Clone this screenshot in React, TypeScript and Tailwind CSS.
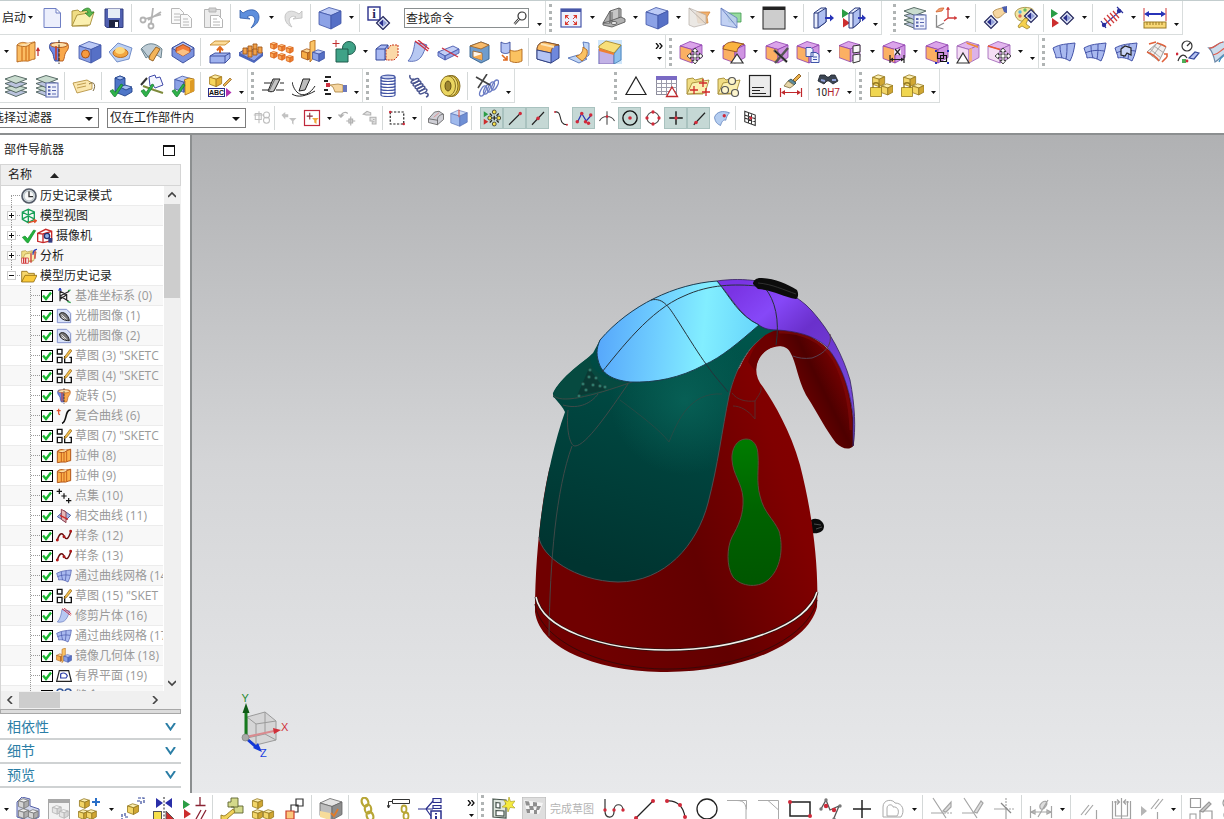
import { useState } from 'react'
import type { ReactNode } from 'react'

type Faces = [string, string, string, string]

// top, left, right, outline
const BLUE: Faces = ['#bccaf6', '#8ca2e6', '#5670c6', '#3f54a6']
const ORANGE: Faces = ['#fcd592', '#f7ae48', '#d9822a', '#a3561a']
const YELLOW: Faces = ['#fbeeb0', '#f2d568', '#d0a632', '#94781f']
const GRAY: Faces = ['#e4e4e4', '#bdbdbd', '#8d8d8d', '#666666']
const PALE: Faces = ['#f1f1f1', '#e6e6e6', '#d6d6d6', '#b5b5b5']
const SYNC: Faces = ['#dba4ea', '#fbb063', '#cf94e2', '#8e3fae']
const LILAC: Faces = ['#e2b6ee', '#f4ddf4', '#dcb2e8', '#9a5cb4']

const Cube = ({ c, x = 0, y = 0, s = 1 }: { c: Faces; x?: number; y?: number; s?: number }) => (
  <g transform={`translate(${x} ${y}) scale(${s})`} stroke={c[3]} strokeWidth={0.8 / s} strokeLinejoin="round">
    <path d="M1 6 11 1.500 23 5 13 9.500Z" fill={c[0]} />
    <path d="M1 6 13 9.500V23L1 18.500Z" fill={c[1]} />
    <path d="M13 9.500 23 5V17.500L13 23Z" fill={c[2]} />
  </g>
)

const Dots = ({ p, fill = '#d02a3a', r = 1.7 }: { p: number[][]; fill?: string; r?: number }) => (
  <>
    {p.map(([x, y], i) => (
      <circle key={i} cx={x} cy={y} r={r} fill={fill} />
    ))}
  </>
)

const Tick = () => <path d="M1 17l3-1.500 2 3 6-8.500 2 1L6.500 22.500H5Z" fill="#2fb34a" stroke="#137a2c" strokeWidth=".7" />

const Diamond = ({ x = 0, y = 0 }) => (
  <g transform={`translate(${x} ${y})`}>
    <path d="M7 .5 13.500 7 7 13.500.5 7Z" fill="#dfe4f6" stroke="#23265c" strokeWidth="1.200" />
    <path d="M7 3.500V10.500L3 7Z" fill="#2a2f8c" />
    <path d="M7 3.500V10.500L11 7Z" fill="#93a0d8" />
  </g>
)

const Stack = () => (
  <g fill="#c9dccf" stroke="#4b5f5a" strokeWidth=".9" strokeLinejoin="round">
    <path d="M1 18l10-3 12 3-11 4.500Z" fill="#bac3dd" />
    <path d="M1 14l10-3 12 3-11 4.500Z" />
    <path d="M1 9.500l10-3 12 3L12 14Z" fill="#bac3dd" />
    <path d="M1 5l10-3.500L23 5 12 9.500Z" />
  </g>
)

const List = () => (
  <g>
    <rect x="11" y="9" width="12" height="14" fill="#eef1fc" stroke="#5a68b0" />
    <path d="M13 12h2.500v2H13ZM13 15.500h2.500v2H13ZM13 19h2.500v2H13Z" fill="#5a68b0" />
    <path d="M17 13h4M17 16.500h4M17 20h4" stroke="#5a68b0" />
  </g>
)

const Move = ({ x = 8, y = 8 }) => (
  <path
    transform={`translate(${x} ${y})`}
    d="M8 0l3 3.500H9V7h3.500V5L16 8l-3.500 3V9H9v3.500h2L8 16l-3-3.500h2V9H3.500v2L0 8l3.500-3v2H7V3.500H5Z"
    fill="#fff"
    stroke="#333"
    strokeWidth=".9"
  />
)

const Sheet = ({ grid = 1 }) => (
  <g stroke="#4453a8" strokeWidth="1" fill="none">
    <path d="M1 8C8 4 15 4 23 3c-1 7-2 12-5 18-5-3-10-4-14-3C4 15 2 12 1 8Z" fill="#a9b9ef" />
    <path d="M8 6c0 5 1 8 2 12M15 4c0 5 0 10-1 15" />
    {grid > 1 && <path d="M2 13c7-3 13-3 19-2" />}
  </g>
)

const Folder = () => (
  <g stroke="#a58c35" strokeWidth=".9" strokeLinejoin="round">
    <path d="M1 20V5l6-1 2 2 8-2v16Z" fill="#f0dd84" />
    <path d="M1 20 6 9l17-3-4 13Z" fill="#fbf0b0" />
  </g>
)

const PlayRed = () => (
  <g>
    <path d="M0 3l7 4.500L0 12Z" fill="#2a9d45" />
    <path d="M1 21.500V12l7 5Z" fill="#cc2e2e" />
  </g>
)

const icons: Record<string, ReactNode> = {
  new: <path d="M4 2.500h12l4.500 4.500v14.500H4ZM16 2.500V7h4.500" fill="#eceffc" stroke="#6f7fc4" />,
  open: (
    <g>
      <Folder />
      <path d="M11 5c5-5 9-3 9 1h3l-4.500 5L14 7h3c0-3-3-3-6-2Z" fill="#58b84e" stroke="#2c7a2c" strokeWidth=".7" />
    </g>
  ),
  save: (
    <g>
      <path d="M3 3h18v18.500H5L3 20Z" fill="#5060b0" stroke="#333f80" />
      <rect x="6" y="3" width="12" height="9" fill="#e6ecf6" />
      <rect x="7" y="14" width="10" height="7.500" fill="#1d2440" />
      <rect x="13" y="16" width="3" height="5" fill="#fff" />
    </g>
  ),
  cut: (
    <g fill="none" stroke="#b3b3b3" strokeWidth="1.800">
      <circle cx="4" cy="14" r="2.500" />
      <circle cx="12" cy="20" r="2.500" />
      <path d="M6 13 22 8.500M12 17.500 14 2M22 6 9 14" />
    </g>
  ),
  copy: (
    <g fill="#fafafa" stroke="#b8b8b8">
      <path d="M1.500 2.500h8l4 4v11h-12Z" />
      <path d="M4 8h6M4 11h6M4 14h6" />
      <path d="M10.500 8.500h7l4 4v9h-11Z" />
      <path d="M13 13h5M13 16h6M13 19h6" />
    </g>
  ),
  paste: (
    <g fill="#ececec" stroke="#b5b5b5">
      <path d="M3.500 3.500h16v18h-16Z" />
      <path d="M8 2h7v4H8Z" fill="#d2d2d2" />
      <path d="M9.500 9.500h8l4 4v8h-12Z" fill="#fff" />
      <path d="M12 13h4M12 16h7M12 19h7" />
    </g>
  ),
  undo: <path d="M2 12V4l3 3c8-6 16-3 16 4 0 5-3 8-8 11 3-4 5-8 3-11-2-2-4-2-7 0l3 2Z" fill="#5e8fdd" stroke="#2e5aa8" strokeWidth=".8" />,
  redo: <path d="M21 12V5l-3 3C11 3 4 5 4 11c0 4 2 8 7 10-3-4-4-8-1-10 2-1 3-1 5 0l-3 2Z" fill="#e0e0e0" stroke="#bdbdbd" strokeWidth=".8" />,
  cube: <Cube c={BLUE} />,
  info: (
    <g>
      <rect x="1" y="1" width="12" height="13" fill="#fff" stroke="#2a2f8c" strokeWidth="1.400" />
      <text x="7" y="12" textAnchor="middle" fontSize="13" fontWeight="700" fontFamily="Liberation Serif" fill="#23265c">i</text>
      <Diamond x={9} y={10} />
    </g>
  ),
  fit: (
    <g>
      <rect x="2" y="3" width="20" height="18" fill="#eef1fc" stroke="#4656a8" strokeWidth="1.200" />
      <path d="M2 3h20v3H2Z" fill="#4656a8" />
      <path d="M6 9h4L6 13ZM18 9v4l-4-4ZM6 19v-4l4 4ZM18 19h-4l4-4Z" fill="#d93a2e" />
      <path d="M7 10l3 3M17 10l-3 3M7 18l3-3M17 18l-3-3" stroke="#d93a2e" />
    </g>
  ),
  bracket: (
    <g stroke="#5a5a5a" strokeWidth=".9" strokeLinejoin="round">
      <path d="M8 5 17 2l2 1v10l-9 3-2 1Z" fill="#c6c6c6" />
      <path d="M8 5 1 17l7 0ZM1 17l7-2 11-4 4 2v3l-13 5-9-2Z" fill="#b0b0b0" />
      <path d="M17 2v10M10 6v10" fill="none" />
      <ellipse cx="12" cy="17" rx="3" ry="1.500" fill="#eee" />
    </g>
  ),
  clipOff: (
    <g strokeWidth=".8">
      <path d="M8 6h14l-3 5 1 6H10Z" fill="#f4b06a" stroke="#d08b48" />
      <path d="M1 2v17l5 2 12-3V9Z" fill="#e8e4e0" opacity=".85" stroke="#b3aaa2" />
      <path d="M1 2 18 18" stroke="#b3aaa2" />
    </g>
  ),
  clip: (
    <g strokeWidth=".8">
      <path d="M8 7h14v9H10Z" fill="#97dba0" stroke="#3f9a4c" />
      <path d="M2 2v17l16 3V12Z" fill="#bccdf2" opacity=".9" stroke="#5a73bb" />
      <path d="M2 2 18 21" stroke="#5a73bb" />
    </g>
  ),
  background: (
    <g>
      <rect x="1" y="1" width="22" height="22" fill="#cdcdcd" stroke="#222" />
      <path d="M1 1h22v3H1Z" fill="#222" />
    </g>
  ),
  viewOut: (
    <g strokeLinejoin="round">
      <path d="M3 7 10 2h5v14l-8 6H3Z" fill="#e9eefc" stroke="#28397c" />
      <path d="M7 7 15 2v14l-8 6Z" fill="#aebff0" stroke="#28397c" />
      <path d="M3 7h4" stroke="#28397c" />
      <path d="M14 11h5V8.500l4 3.500-4 3.500V13h-5Z" fill="#2733b8" />
    </g>
  ),
  viewReplace: (
    <g strokeLinejoin="round">
      <PlayRed />
      <path d="M7 7 13 2h5v14l-7 6H7Z" fill="#e9eefc" stroke="#28397c" />
      <path d="M11 7 18 2v14l-7 6ZM7 7h4" fill="#aebff0" stroke="#28397c" />
      <path d="M16 11h4V8.500l4 3.500-4 3.500V13h-4Z" fill="#2733b8" />
    </g>
  ),
  layerList: (
    <g>
      <Stack />
      <List />
    </g>
  ),
  layers: <Stack />,
  wcs: (
    <g fill="none" strokeWidth="1.300">
      <path d="M14 2v10h8M14 12l-4 3" stroke="#d03a3a" />
      <path d="M12.500 3.500 14 1l1.500 2.500ZM20.500 10.500 23 12l-2.500 1.500Z" fill="#d03a3a" stroke="#d03a3a" strokeWidth=".6" />
      <path d="M2.500 9v12L10 17M2.500 21l7 2" stroke="#8a8a8a" />
      <path d="M2 6c2-4 5-4 8-4l-2 3Z" fill="#f0a070" stroke="#d0602a" strokeWidth=".8" />
    </g>
  ),
  handDiamond: (
    <g>
      <path d="M10 6c2-3 6-3 12-5l2 5c-4 1-5 5-9 6-2 0-4-1-5-6Z" fill="#f6d6a0" stroke="#a9803c" strokeWidth=".8" />
      <path d="M19 1l5-1v7l-3-1Z" fill="#4c5fb0" />
      <Diamond x={1} y={9} />
    </g>
  ),
  palette: (
    <g>
      <path d="M1 8c0-5 8-8 15-6 5 1 5 6 2 8-3 1-5 0-6 3 0 4-10 3-11-5Z" fill="#f3e6a4" stroke="#9b8532" strokeWidth=".8" />
      <Dots p={[[6, 6]]} fill="#59b6e0" />
      <Dots p={[[11, 4]]} fill="#6ac060" />
      <Dots p={[[6, 10]]} fill="#e06a50" />
      <Diamond x={10} y={3} />
      <path d="M4 20l7-8 3 1-2 5 4 3-3 2-5-3-3 2Z" fill="#f5d04e" stroke="#9b8532" strokeWidth=".8" />
    </g>
  ),
  playDiamond: (
    <g>
      <PlayRed />
      <Diamond x={9} y={5} />
    </g>
  ),
  measurePath: (
    <g strokeWidth="1.200">
      <path d="M3 20 21 4" stroke="#3440b8" />
      <path d="M4 12l7 8M7 9l7 8M10 7l7 8M13 5l6 7" stroke="#d03a3a" />
      <Dots p={[[4, 19], [19, 5]]} fill="#2a2f9c" r={2.2} />
      <path d="M1 15l5 7M17 1l6 6" stroke="#2a2f9c" />
    </g>
  ),
  measure: (
    <g>
      <path d="M1 2v13M23 2v13" stroke="#d03a3a" />
      <path d="M1 8l5-3v2h12V5l5 3-5 3V9H6v2Z" fill="#2733b8" />
      <rect x="1" y="16" width="22" height="6" fill="#f8d877" stroke="#9b7a22" />
      <path d="M4 16v3M7 16v3M10 16v3M13 16v3M16 16v3M19 16v3" stroke="#9b7a22" />
    </g>
  ),
  extrude: (
    <g stroke="#b2631a" strokeWidth=".9" strokeLinejoin="round">
      <path d="M1 5c3-3 6-3 9-2 3 1 5-1 9-1v17c-4 0-6 3-9 2-3 0-6 0-9 1Z" fill="#fbbd63" />
      <path d="M6 6v15M10 3v18M13 5v16" fill="none" stroke="#d97e28" strokeWidth="1.400" />
      <path d="M1 5c5 2 10 2 12 0s4-2 6-3" fill="#fde0ab" />
      <path d="M22 16V9M20.500 11 22 8l1.500 3" fill="none" stroke="#c02d2d" strokeWidth="1.200" />
    </g>
  ),
  revolve: (
    <g strokeWidth=".9">
      <path d="M12 3H4C1 6 3 10 5 12c2 3 1 6 3 9h4Z" fill="#6f88e8" stroke="#2d3f90" />
      <path d="M12 3h8c3 3 1 7-1 9-2 3-1 6-3 9h-4Z" fill="#f9a84a" stroke="#b0561a" />
      <ellipse cx="12" cy="5" rx="8.500" ry="2.500" fill="#fde0ab" stroke="#b0561a" />
      <path d="M12 0v24" stroke="#222" strokeDasharray="3 1.500" />
      <path d="M9 6v14" stroke="#c8361f" strokeWidth="1.500" />
    </g>
  ),
  hole: (
    <g>
      <Cube c={BLUE} />
      <circle cx="7.500" cy="14" r="4" fill="#f79a3e" stroke="#a04812" strokeWidth=".9" />
    </g>
  ),
  boss: (
    <g strokeWidth=".9">
      <path d="M0 12 9 3l14 5-3 11-12 3Z" fill="#bcd0f2" stroke="#6a86c4" />
      <ellipse cx="11.500" cy="13" rx="7.500" ry="4.500" fill="#f3a63f" stroke="#b0621c" />
      <ellipse cx="11" cy="10.500" rx="5" ry="3.500" fill="#fdd87e" />
    </g>
  ),
  rib: (
    <g strokeWidth=".9" strokeLinejoin="round">
      <path d="M1 9C7 2 15 2 22 9l-1 9C16 13 11 14 6 18Z" fill="#bfcdd6" stroke="#5f7884" />
      <path d="M10 15 16 7l4 2-7 12-4-2Z" fill="#f4b459" stroke="#8e5a1c" />
      <path d="M2 9l7 9" stroke="#5f7884" />
    </g>
  ),
  pocket: (
    <g strokeWidth=".9" strokeLinejoin="round">
      <path d="M1 8 12 2l11 6v8l-11 7-11-7Z" fill="#7b92de" stroke="#35489a" />
      <path d="M1 8 12 2l11 6-11 7Z" fill="#b4c4f4" stroke="#35489a" />
      <path d="M5 8l7-3.500L19 8v4l-7 4-7-4Z" fill="#f47c3a" stroke="#a0431a" />
      <path d="M5 12l7-3 7 3-7 4Z" fill="#fbc182" />
    </g>
  ),
  offsetRegion: (
    <g strokeWidth=".9" strokeLinejoin="round">
      <path d="M2 5l5-4h15l-5 4Z" fill="#fcdc9a" stroke="#c68a2e" />
      <path d="M12 15V8M9 10.500 12 7l3 3.500" fill="none" stroke="#e06a20" strokeWidth="2" />
      <path d="M2 16l5-3h15v5l-5 5H2Z" fill="#9fb2ee" stroke="#35489a" />
      <path d="M2 16h15l5-3M17 16v7" fill="none" stroke="#35489a" />
    </g>
  ),
  pattern: (
    <g strokeWidth=".9">
      <path d="M0 13 8 8l16 5-9 8Z" fill="#8da3ea" stroke="#35489a" />
      <path d="M0 13v3l15 7 9-7v-3l-9 8Z" fill="#4b66bd" />
      {[[4, 8], [9, 6], [14, 4], [9, 11], [14, 9], [19, 7]].map(([x, y]) => (
        <path key={`${x}-${y}`} d={`M${x} ${y}h4v6h-4Z`} fill="#f0a14a" stroke="#a35a1a" />
      ))}
    </g>
  ),
  patternBoxes: (
    <g>
      {[[0, 2], [8, 4], [16, 6], [0, 11], [8, 13], [16, 15]].map(([x, y]) => (
        <Cube key={`${x}-${y}`} c={['#fdc987', '#fba858', '#ef7f31', '#d9641c']} x={x} y={y} s={0.31} />
      ))}
    </g>
  ),
  mirror: (
    <g>
      <Cube c={ORANGE} x={0} y={8} s={0.52} />
      <path d="M9 2 14 0v16l-5 6Z" fill="#fbc466" stroke="#b76d1c" strokeWidth=".9" />
      <Cube c={BLUE} x={11} y={9} s={0.54} />
    </g>
  ),
  unite: (
    <g>
      <circle cx="17" cy="8" r="6.500" fill="#3fa287" stroke="#1e5c4c" />
      <path d="M4 9h12v13H4Z" fill="#3fa287" stroke="#1e5c4c" />
      <path d="M4 0v7M.5 3.500h7" stroke="#c02d2d" />
    </g>
  ),
  trimBody: (
    <g strokeWidth="1" strokeLinejoin="round">
      <path d="M1 9l5-4h7v10l-3 5H1Z" fill="#a9b9f2" stroke="#35489a" />
      <path d="M13 9l3-4h7v11l-4 4h-8V9" fill="#fbd9a8" stroke="#c8361f" strokeDasharray="2 1" />
      <path d="M1 9h9l3-4M10 9v11" fill="none" stroke="#35489a" />
    </g>
  ),
  trimSheet: (
    <g strokeWidth=".9">
      <path d="M9 2c4 2 8 1 12 3-3 5-3 8-6 12-3 4-8 5-13 4 5-5 6-13 7-19Z" fill="#b7c8f2" stroke="#5468b4" />
      <path d="M9 1l13 10M12 0l11 9" stroke="#cf3140" strokeWidth="1.400" />
    </g>
  ),
  blade: (
    <g strokeWidth=".9" strokeLinejoin="round">
      <path d="M1 12 16 6l6 3-14 7Z" fill="#c2cef5" stroke="#4a5bb0" />
      <path d="M1 12v4l7 4v-4ZM8 16v4l14-7V9Z" fill="#9aace8" stroke="#4a5bb0" />
      <path d="M5 8l16 9" stroke="#cf3140" strokeWidth="1.200" />
    </g>
  ),
  shell: (
    <g strokeWidth=".9" strokeLinejoin="round">
      <path d="M2 6 13 2l8 3v14l-8 4-11-6Z" fill="#6f9ccc" stroke="#33608c" />
      <path d="M2 6 13 2l8 3-8 4Z" fill="#f8bc6c" stroke="#a0662a" />
      <path d="M5 11l9 2v7l-9-3Z" fill="#fff6e8" stroke="#a0662a" />
      <path d="M5 17l9-3v6Z" fill="#f6ad52" />
    </g>
  ),
  thicken: (
    <g strokeWidth=".9">
      <path d="M2 2c3 2 6 2 9 0v10c-3 2-6 2-9 0Z" fill="#b4c4f4" stroke="#35489a" />
      <path d="M11 10c4 2 8 1 12-1v12c-4 2-8 2-12 0Z" fill="#fbc261" stroke="#b0661c" />
      <path d="M3 15l5 5M8 16v4H4" fill="none" stroke="#e06a20" strokeWidth="1.600" />
    </g>
  ),
  edgeBlend: (
    <g strokeWidth=".9" strokeLinejoin="round">
      <path d="M1 10c0-5 3-8 8-8l14 3v13l-8 5-14-4Z" fill="#6f88dc" stroke="#28397c" />
      <path d="M1 10c0-5 3-8 8-8l14 3c-5 0-8 3-8 8Z" fill="#fbb95f" stroke="#8e5118" />
      <path d="M5 4l13 3" stroke="#fde5b8" strokeWidth="2" />
      <path d="M1 10l14 3v10l-14-4Z" fill="#b4c4f4" stroke="#28397c" />
    </g>
  ),
  faceBlend: (
    <g strokeWidth=".9">
      <path d="M16 2l6 1v12l-5 4c1-6 0-12-1-17Z" fill="#bfd4f4" stroke="#5273b8" />
      <path d="M1 18l10-3 9 4-8 4Z" fill="#bfd4f4" stroke="#5273b8" />
      <path d="M9 16c5-1 7-4 7-9l4 3c1 5-1 8-5 11Z" fill="#fbc261" stroke="#b0661c" />
    </g>
  ),
  draft: (
    <g strokeWidth=".9" strokeLinejoin="round">
      <path d="M0 0h24v24H0Z" fill="#cfe6fa" />
      <path d="M1 9l15 5v10H1Z" fill="#c2b2e6" stroke="#7c68b0" />
      <path d="M16 14 23 5v15l-7 4Z" fill="#8dc0ee" stroke="#4f85b8" />
      <path d="M1 6 8 1l15 4-7 8-15-5Z" fill="#f7df7a" stroke="#a5872c" />
      <path d="M1 8l15 5v2L1 11Z" fill="#ef7f31" />
    </g>
  ),
  moveFace: (
    <g>
      <Cube c={SYNC} />
      <Move />
    </g>
  ),
  pullFace: (
    <g>
      <Cube c={SYNC} />
      <path d="M1 9c1-5 5-7 10-7l11 2c-4 1-7 4-7 8Z" fill="#fbb33f" stroke="#8e5118" strokeWidth=".9" />
      <path d="M15 14l6 9H9Z" fill="#fff" stroke="#333" strokeWidth="1.200" />
    </g>
  ),
  deleteFace: (
    <g>
      <Cube c={SYNC} />
      <path d="M9 10l13 12M23 8 10 23" stroke="#555" strokeWidth="2.400" />
      <path d="M10 11l12 11" stroke="#111" />
    </g>
  ),
  copyFace: (
    <g>
      <Cube c={SYNC} />
      <path d="M10 7.500h5l2 2v7h-7ZM15 12.500h5l3 2v8h-8Z" fill="#f2f5ff" stroke="#3f55a8" />
      <path d="M17 17h4M17 19.500h4" stroke="#3f55a8" />
    </g>
  ),
  patternFace: (
    <g>
      <Cube c={SYNC} x={-1} s={0.95} />
      <path d="M14 6l7-1v7l-7 1ZM14 15l7-1v7l-7 2Z" fill="#f8f8f8" stroke="#333" />
    </g>
  ),
  dimFace: (
    <g>
      <Cube c={SYNC} />
      <path d="M8 15v8M22 15v8M8 19.500h14" stroke="#222" strokeWidth="1.200" />
      <path d="M8 19.500l3-2v4ZM22 19.500l-3-2v4Z" fill="#222" />
      <path d="M12 9h7v6h-7Z" fill="#fff" opacity=".8" />
      <path d="M13 9l5 6M18 9l-5 6" stroke="#222" strokeWidth="1.200" />
    </g>
  ),
  groupFace: (
    <g>
      <Cube c={SYNC} />
      <path d="M12.500 12.500h6v6h-6ZM15.500 15.500h6v6h-6Z" fill="none" stroke="#111" strokeWidth="1.200" />
      <path d="M10 10h2v2h-2ZM22 10h2v2h-2ZM10 22h2v2h-2ZM22 22h2v2h-2Z" fill="#2733b8" />
    </g>
  ),
  shapeFace: (
    <g>
      <Cube c={LILAC} />
      <path d="M10 2l12 4v2L11 4Z" fill="#f08a3a" />
      <path d="M13 9.500v13l3-1.500V8Z" fill="#f6b27a" />
      <path d="M7 13l6 10H1Z" fill="#fff" stroke="#333" strokeWidth="1.200" />
    </g>
  ),
  moveEdge: (
    <g>
      <Cube c={LILAC} />
      <path d="M1 6l12 3.500" stroke="#ef5a31" strokeWidth="1.800" />
      <Move />
    </g>
  ),
  surfRuled: <Sheet />,
  surfMesh: <Sheet grid={2} />,
  surfFill: (
    <g>
      <Sheet grid={2} />
      <path d="M7 15V9l4-3 6 2v7l-4-2-2 3Z" fill="#c9d4f6" stroke="#222" strokeWidth="1.200" />
    </g>
  ),
  surfSweep: (
    <g fill="none" strokeWidth="1">
      <path d="M2 12 12 3l9 4-7 14Z" fill="#f1efee" stroke="#999" />
      <path d="M5 9l11 9M9 6l10 7M16 5l-9 12M12 3 4 14" stroke="#a8a8a8" />
      <path d="M2 12c5 2 9 4 12 9M12 3c4 1 7 2 9 4" stroke="#e0603a" strokeWidth="1.500" />
      <path d="M4 4l7-2M17 22l5-5M22 17v-3h-3" stroke="#e0603a" strokeWidth="1.600" />
    </g>
  ),
  curveTools: (
    <g fill="none" strokeWidth="1.200">
      <circle cx="11" cy="6" r="5" stroke="#333" />
      <path d="M11 6l3-3" stroke="#333" />
      <path d="M2 21c2-6 6-8 9-3" stroke="#333" />
      <path d="M13 18l6-6 4 1-5 6Z" fill="#b6c3f2" stroke="#35489a" />
      <path d="M6 19h4v4H6Z" fill="#4cae57" stroke="none" />
      <Dots p={[[1, 14], [11, 21]]} r={1.4} />
    </g>
  ),
  surfSwoop: (
    <g fill="none" strokeWidth="1.200">
      <path d="M2 8C8 9 9 3 16 2h8v10c-8 0-9 6-16 10-1-5-2-10-6-14Z" fill="#ccdcec" stroke="#6b88a8" />
      <path d="M2 8C8 9 9 3 16 2M6 15c8-1 8-8 18-9" stroke="#e05a4a" />
      <path d="M12 22c2-6 6-8 12-9" stroke="#3b8fc0" />
    </g>
  ),
  tag: (
    <g strokeWidth=".9">
      <path d="M1 9l14-3 5 3v6L5 19Z" fill="#fbe7ae" stroke="#b89444" />
      <path d="M5 11l9-2M5 14l9-2" stroke="#b89444" />
      <path d="M17 10c6-4 7 3 4 7" fill="none" stroke="#6b5a30" />
    </g>
  ),
  checkBlock: (
    <g strokeWidth=".9" strokeLinejoin="round">
      <path d="M6 4l5-2 5 2v8l7 2v4l-7 4-10-4Z" fill="#4f76c8" stroke="#24448c" />
      <path d="M6 4l5-2 5 2-5 2ZM11 13l5-2 7 2-6 3Z" fill="#a5bdf0" stroke="#24448c" />
      <Tick />
    </g>
  ),
  checkSketch: (
    <g strokeWidth="1">
      <path d="M3 12l11 4 9 3" stroke="#7e8a3c" strokeWidth="2" />
      <path d="M9 3l6-2 1 3 4-1 3 8-8 3-2-3-3 1Z" fill="#f5f6ff" stroke="#3f49a8" />
      <Tick />
      <path d="M1 11 7 4" stroke="#333" strokeWidth="2" />
    </g>
  ),
  checkPart: (
    <g>
      <Cube c={BLUE} x={3} y={1} s={0.75} />
      <path d="M13 6l5-2 5 1v12l-9 4V7Z" fill="#fbca4a" stroke="#a36a14" strokeWidth=".8" />
      <path d="M19 7v12l4-2V5Z" fill="#dd9a24" />
      <Tick />
    </g>
  ),
  abc: (
    <g>
      <Cube c={['#fbe9a0', '#f7d65c', '#e2ae35', '#a3781a']} x={1} y={0} s={0.55} />
      <path d="M15 11 22 4l1.500 1.500-7 7Z" fill="#e9b34e" stroke="#8a5a1c" strokeWidth=".7" />
      <rect x=".5" y="14.500" width="16" height="8" fill="#fff" stroke="#2a2f8c" />
      <text x="8.500" y="21" textAnchor="middle" fontSize="7" fontWeight="700" fontFamily="Liberation Sans" fill="#111">ABC</text>
      <path d="M18 14l5.500 4.500L18 23Z" fill="#b033b0" />
    </g>
  ),
  gearFlat: (
    <g strokeWidth="1">
      <path d="M1 16h6M15 16h8M3 9h8M19 9h4" fill="none" stroke="#222" />
      <path d="M12 5h7l-6 12c-2 1-4 1-6 0Z" fill="#c4c4c4" stroke="#222" />
      <path d="M14 5 8 17" stroke="#666" />
    </g>
  ),
  gearCurve: (
    <g strokeWidth="1">
      <path d="M0 8c3 14 14 18 23 4" fill="none" stroke="#222" />
      <path d="M0 20c6 4 14 2 23-3" fill="none" stroke="#222" />
      <path d="M11 5h7l-5 11-6 1Z" fill="#bdbdbd" stroke="#222" />
    </g>
  ),
  listHand: (
    <g>
      <path d="M2 2h6v2H2ZM1 6h4v2H1ZM1 15h4v2H1ZM2 19h6v2H2Z" fill="#222" />
      <rect x="3" y="9" width="4" height="4" fill="#cf3140" />
      <path d="M7 11l8-1 5 1v7h-8l-2-5Z" fill="#f6d6a0" stroke="#a9803c" strokeWidth=".8" />
      <path d="M20 11h4v7h-4Z" fill="#6a78bc" />
    </g>
  ),
  coil: (
    <g fill="none" stroke="#4355a4" strokeWidth="1.200">
      {[3, 6, 9, 12, 15, 18].map((y) => (
        <path key={y} d={`M5 ${y}c0 2 14 2 14 0M5 ${y}v3c0 2 14 2 14 0v-3`} />
      ))}
      <ellipse cx="12" cy="3" rx="7" ry="1.800" fill="#c8d0ee" />
    </g>
  ),
  spring: (
    <g fill="none" stroke="#4a5590" strokeWidth="1.500">
      <path d="M3 1c-1 3 1 5 4 4" />
      {[0, 1, 2, 3, 4].map((i) => (
        <ellipse key={i} cx={8 + i * 2} cy={7 + i * 2.6} rx="4.200" ry="1.700" transform={`rotate(-25 ${8 + i * 2} ${7 + i * 2.6})`} />
      ))}
      <path d="M18 19c4 0 4 3 1 4" />
    </g>
  ),
  ring: (
    <g strokeWidth=".9">
      <ellipse cx="14" cy="12" rx="8" ry="10.500" fill="#d8b83a" stroke="#7d651a" />
      <ellipse cx="12" cy="12" rx="8" ry="10.500" fill="#efdc70" stroke="#7d651a" />
      <ellipse cx="10" cy="12" rx="7.500" ry="10" fill="#ead560" stroke="#7d651a" />
      <ellipse cx="10" cy="12" rx="3" ry="5" fill="#9c8530" stroke="#5d4a10" />
    </g>
  ),
  springCut: (
    <g fill="none" strokeWidth="1.300">
      {[0, 1, 2, 3].map((i) => (
        <ellipse key={i} cx={8 + i * 4} cy={17 - i * 2} rx="2.400" ry="5.500" transform={`rotate(28 ${8 + i * 4} ${17 - i * 2})`} stroke="#6b7cc4" />
      ))}
      <path d="M1 3l14 8M12 0 3 14" stroke="#444" strokeWidth="1.600" />
    </g>
  ),
  triangle: <path d="M12 3 22 20.500H2Z" fill="#fff" stroke="#222" strokeWidth="1.200" />,
  table: (
    <g>
      <rect x="1.500" y="2.500" width="20" height="18" fill="#fff" stroke="#8d8d9c" />
      <path d="M1 2h21v4H1Z" fill="#7a6ac4" />
      <path d="M1 9.500h21M1 13.500h21M1 17.500h21M6.500 6v14M11.500 6v14M16.500 6v14" stroke="#9c9cab" />
      <path d="M17 13l5.500 9.500h-11Z" fill="#fff" stroke="#c0282c" strokeWidth="1.300" />
    </g>
  ),
  folderPoints: (
    <g>
      <Folder />
      <path d="M17 5v8M13 9h8M8 12v8M4 16h8M20 14v8M16 18h8" stroke="#d02a2a" strokeWidth="1.300" />
    </g>
  ),
  folderCircles: (
    <g>
      <Folder />
      <g fill="#fdf6cf" stroke="#555" strokeWidth="1.200">
        <circle cx="15" cy="7" r="3.500" />
        <circle cx="8" cy="16" r="3.500" />
        <circle cx="18" cy="19" r="3.500" />
      </g>
    </g>
  ),
  note: (
    <g>
      <rect x="1.500" y="1.500" width="21" height="21" fill="#ebebeb" stroke="#222" strokeWidth="1.200" />
      <path d="M4 13.500h12M4 16.500h8M4 19.500h14" stroke="#222" />
    </g>
  ),
  brushDim: (
    <g strokeWidth=".9">
      <path d="M14 6 20 0l2 2-6 6Z" fill="#e8b04c" stroke="#8a5a1c" />
      <path d="M12 5l5 4-2 2-6-4Z" fill="#5c8a9a" stroke="#2e4e5a" />
      <path d="M9 7l6 4-4 3-6-2Z" fill="#e6d6a8" stroke="#8a7a50" />
      <path d="M1.500 14v9M22.500 14v9" stroke="#c0282c" strokeWidth="1.200" />
      <path d="M2 18.500l4-2.500v2h12v-2l4 2.500L18 21v-2H6v2Z" fill="#c0282c" />
    </g>
  ),
  tolerance: (
    <g>
      <path d="M4 1h5l2 2h2l2-2h4l3 6-5 3-4-3h-2l-3 3-6-3Z" fill="#3c4552" stroke="#1c222c" strokeWidth=".8" />
      <path d="M5 6l4 1M16 6l4 0" stroke="#8fa0d8" strokeWidth="2" />
      <text x="12" y="22" textAnchor="middle" fontSize="10" fontFamily="Roboto" fill="#222">10<tspan fill="#b0202c">H7</tspan></text>
    </g>
  ),
  lock: (
    <g>
      <Cube c={YELLOW} x={3} y={0} s={0.55} />
      <Cube c={YELLOW} x={12} y={9} s={0.52} />
      <path d="M1.500 13.500h11v9h-11Z" fill="#f0d650" stroke="#94781f" strokeWidth=".8" />
      <path d="M4 14v-3c0-3 6-3 6 0v3" fill="none" stroke="#94781f" strokeWidth="1.300" />
    </g>
  ),
  // selection bar
  filterAxes: (
    <g fill="none" stroke="#bdbdbd" strokeWidth="1.400">
      <path d="M8 3v16M1 8h14M3 6h8v8H3Z" />
      <circle cx="18" cy="8" r="4" />
      <circle cx="18" cy="15" r="4" />
    </g>
  ),
  filterGray: <path d="M2 8l5-4v3h4v4H7v3ZM12 12h10l-4 4v5l-2-2v-3Z" fill="#c2c2c2" />,
  filterBox: (
    <g>
      <rect x="2" y="2" width="20" height="20" fill="#fff" stroke="#c0283c" strokeWidth="1.600" />
      <path d="M9 5v9M5 9.500h8" stroke="#8a2a34" strokeWidth="1.400" />
      <path d="M12 12h9l-3 3v5l-3-2v-3Z" fill="#f0a83c" />
    </g>
  ),
  rotateOff: <path d="M4 10c0-5 6-7 9-4M4 11 1 8h6ZM17 10v12M11 16h12M14.500 13.500h5v5h-5Z" fill="none" stroke="#b0b0b0" strokeWidth="1.500" />,
  handOff: <path d="M3 7l5-4 5 2v3H7ZM12 11h8v9h-5v-4h-3ZM16 14h2M16 17h2" fill="#e2e2e2" stroke="#b0b0b0" strokeWidth="1.400" />,
  marquee: (
    <g>
      <rect x="3" y="4" width="18" height="16" fill="none" stroke="#222" strokeWidth="1.600" strokeDasharray="3 2" />
      <Dots p={[[3, 4], [21, 20]]} />
    </g>
  ),
  loaf: (
    <g stroke="#555" strokeWidth="1" strokeLinejoin="round">
      <path d="M2 13 10 4l6-1 6 4v7l-8 7-12-3Z" fill="#cfcfd6" />
      <path d="M14 21v-7c0-4 4-7 8-7M2 13l12 2" fill="none" />
      <path d="M9 11l7-6" stroke="#e08080" />
    </g>
  ),
  boxUp: (
    <g>
      <Cube c={['#cfdcf6', '#9fb9ec', '#6f8fd4', '#5069b0']} />
      <path d="M12 1v10" stroke="#e0584a" strokeWidth="1.500" />
    </g>
  ),
  snapAll: (
    <g>
      <path d="M1 3l6 4-6 4Z" fill="#2a9d45" />
      <path d="M1 13l6 4-6 4Z" fill="#cc2e2e" />
      <g fill="#f5df4a" stroke="#222">
        <circle cx="15" cy="4" r="2.600" />
        <circle cx="21" cy="12" r="2.600" />
        <circle cx="15" cy="20" r="2.600" />
        <circle cx="9" cy="12" r="2.600" />
      </g>
      <path d="M15 9v6M12 12h6M9 6l3 3M21 6l-3 3M9 18l3-3M21 18l-3-3" stroke="#222" strokeWidth="1.600" />
    </g>
  ),
  snapEnd: (
    <g>
      <path d="M4 21 19 6" stroke="#222" strokeWidth="1.500" />
      <Dots p={[[19, 6]]} r={2.2} />
    </g>
  ),
  snapMid: (
    <g>
      <path d="M4 21 20 4" stroke="#222" strokeWidth="1.500" />
      <Dots p={[[12, 12.5]]} r={2.4} />
    </g>
  ),
  snapPole: (
    <g>
      <path d="M4 4c11-2 3 17 16 17" fill="none" stroke="#222" strokeWidth="1.400" />
      <Dots p={[[4, 4], [20, 21]]} r={1.2} />
    </g>
  ),
  snapCurve: (
    <g>
      <path d="M3 18 9 6l6 10 6-7" fill="none" stroke="#2a2fb0" strokeWidth="1.600" />
      <Dots p={[[3, 17], [9, 6], [14, 17], [21, 8], [18, 19]]} r={2.3} />
    </g>
  ),
  snapCross: (
    <g>
      <path d="M2 16c4-8 16-8 20 0M12 3v18" fill="none" stroke="#444" strokeWidth="1.400" />
      <Dots p={[[12, 10]]} />
    </g>
  ),
  snapCenter: (
    <g>
      <circle cx="12" cy="12" r="9.500" fill="none" stroke="#111" strokeWidth="1.800" />
      <Dots p={[[12, 12]]} r={2.4} />
    </g>
  ),
  snapQuad: (
    <g>
      <circle cx="12" cy="12" r="8" fill="none" stroke="#555" strokeWidth="1.400" />
      <Dots p={[[12, 4], [20, 12], [12, 20], [4, 12]]} r={2.2} />
    </g>
  ),
  snapPoint: (
    <g>
      <path d="M12 3v18M3 12h18" stroke="#111" strokeWidth="1.800" />
      <Dots p={[[12, 12]]} r={2.2} />
    </g>
  ),
  snapOn: (
    <g>
      <path d="M5 21 20 5" stroke="#222" strokeWidth="1.500" />
      <Dots p={[[8, 18]]} r={2.4} />
    </g>
  ),
  snapFace: (
    <g>
      <path d="M2 11c3-8 11-9 20-6-4 4-4 7-5 10-3-1-5 1-7 7C6 20 3 18 2 11Z" fill="#b4cdf0" stroke="#5a7cb8" />
      <Dots p={[[15, 9]]} r={2.2} />
    </g>
  ),
  snapGrid: (
    <g>
      <path d="M5 3l14 5v14L5 17ZM10 5v14M14 6v14M5 8l14 5M5 12l14 5" fill="none" stroke="#333" strokeWidth="1.400" />
      <Dots p={[[13, 12]]} r={2} />
    </g>
  ),
  // assembly bar
  assembly: (
    <g>
      <path d="M1 5 6 0l8 2v7l9 3v8l-8 4-14-4Z" fill="#d3d8ee" stroke="#5561a8" />
      <Cube c={['#f0f0f0', '#d4d4d4', '#adadad', '#777777']} x={2} y={1} s={0.46} />
      <Cube c={['#f0f0f0', '#d4d4d4', '#adadad', '#777777']} x={2} y={11} s={0.46} />
      <Cube c={['#f0f0f0', '#d4d4d4', '#adadad', '#777777']} x={12} y={12} s={0.44} />
    </g>
  ),
  asmWindow: (
    <g>
      <rect x="1.500" y="2.500" width="21" height="20" fill="#f2f2f2" stroke="#a8a8a8" />
      <path d="M1 2h22v4H1Z" fill="#a8a8a8" />
      <Cube c={PALE} x={5} y={8} s={0.4} />
      <Cube c={PALE} x={12} y={12} s={0.4} />
    </g>
  ),
  addPart: (
    <g>
      <Cube c={YELLOW} x={1} y={1} s={0.45} />
      <Cube c={YELLOW} x={0} y={12} s={0.45} />
      <Cube c={YELLOW} x={8} y={12} s={0.45} />
      <path d="M18 1v8M14 5h8" stroke="#2a6fc8" strokeWidth="2" />
    </g>
  ),
  movePart: (
    <g>
      <Cube c={YELLOW} x={6} y={6} s={0.5} />
      <path d="M17 1h6v6M16 4h4v4M1 17v6h6M4 16v4h4" fill="none" stroke="#35489a" strokeWidth="1.200" strokeDasharray="3 1" />
    </g>
  ),
  mirrorPart: (
    <g>
      <path d="M4 1l7 5-7 5ZM20 1l-7 5 7 5Z" fill="#2a2fa8" />
      <path d="M12 0v24" stroke="#222" strokeDasharray="2 1.500" />
      <rect x="1.500" y="14.500" width="8" height="8" fill="#f6e04a" stroke="#555" />
      <path d="M14 14v9h9Z" fill="#cc2e2e" stroke="#555" />
    </g>
  ),
  constrain: (
    <g>
      <PlayRed />
      <path d="M17 0v8M12.500 8.500h10M13 22l5-9M18 22l5-9" stroke="#8a2434" strokeWidth="1.300" />
    </g>
  ),
  wrench: (
    <g strokeWidth=".9">
      <path d="M11 1h7v8h5v7h-9v-6h-6V5h3Z" fill="#d3d98a" stroke="#5c6230" />
      <path d="M11 10h7v-1" fill="none" stroke="#5c6230" />
      <path d="M1 18l3 1 2-1 7-6 2 3-7 6-2 3H1Z" fill="#f0d25a" stroke="#94781f" />
    </g>
  ),
  parts: (
    <g>
      <Cube c={YELLOW} x={1} y={1} s={0.46} />
      <Cube c={YELLOW} x={1} y={12} s={0.46} />
      <Cube c={YELLOW} x={12} y={12} s={0.46} />
    </g>
  ),
  sequence: (
    <g strokeWidth="1.200">
      <path d="M14 2h7v7h-7ZM9 8h7v7H9Z" fill="#fff" stroke="#333" />
      <path d="M4 14h8v8H4Z" fill="#fbc87c" stroke="#cc3a2a" />
    </g>
  ),
  crate: (
    <g>
      <Cube c={GRAY} />
      <path d="M1 14l10 2v7l-10-3Z" fill="#f7dc9a" />
      <path d="M12 16l3 3 4-7" fill="none" stroke="#e07a28" strokeWidth="1.800" />
    </g>
  ),
  chain: (
    <g fill="none" stroke="#b8a636" strokeWidth="2.200">
      <ellipse cx="9" cy="5" rx="3.200" ry="4.500" transform="rotate(-20 9 5)" />
      <ellipse cx="12" cy="12" rx="3.200" ry="4.500" transform="rotate(-5 12 12)" />
      <ellipse cx="14" cy="19" rx="3.200" ry="4.500" transform="rotate(-20 14 19)" />
    </g>
  ),
  linkBox: (
    <g fill="none">
      <path d="M5.500 2.500h17v4h-17ZM5 4.500H1.500V11M0 8l1.500 3L3 8" stroke="#333" />
      <ellipse cx="17" cy="12" rx="2.500" ry="3.500" stroke="#b8a636" strokeWidth="1.800" />
      <ellipse cx="19" cy="19" rx="2.500" ry="3.500" stroke="#b8a636" strokeWidth="1.800" />
    </g>
  ),
  treeInfo: (
    <g fill="none" stroke="#2a2f8c" strokeWidth="1.200">
      <path d="M0 12h8M8 12l7-8M8 12h7M8 12l5 7" />
      <path d="M15 1.500h8v4h-8ZM15 8.500h8v3h-8Z" fill="#eef0fb" />
      <rect x="13" y="14" width="10" height="10" fill="#fff" strokeWidth="1.500" />
      <path d="M18 16v1.500M18 19v4" strokeWidth="2" />
    </g>
  ),
  // sketch bar
  sketchNew: (
    <g strokeWidth="1">
      <path d="M2 2l13 1v18L2 20Z" fill="#dfe6de" stroke="#44524a" strokeWidth="1.200" />
      <path d="M5 5.500l4 .500v5L5 10.500ZM5 13.500l8 .500v5l-8-.500Z" fill="#fff" stroke="#44524a" strokeWidth="1.200" />
      <path d="M18 0l1.500 4.500L24 4l-3 4 3 3-5-.500L17 15l-1-4.500L11 10l4-3-2-4 4 1.500Z" fill="#f5ea3e" stroke="#a89a20" strokeWidth=".6" />
    </g>
  ),
  finish: (
    <g>
      <rect width="24" height="24" fill="#dedede" stroke="#b5b5b5" />
      <path d="M2 3l19 3-4 11-12-1Z" fill="#f5f5f5" />
      <path d="M3 4l4 .500 1 4-4 0ZM11 5l4 .500 0 4-4 0ZM7 9h4l1 4H8ZM15 9h4l-2 4h-3ZM4 12h4v4H5ZM12 13h3v4h-3Z" fill="#8f8f8f" />
    </g>
  ),
  profile: (
    <g>
      <path d="M3 2v12c0 8 9 8 9 1V13c0-7 9-7 9 0" fill="none" stroke="#333" strokeWidth="1.200" />
      <Dots p={[[3, 13], [12, 13], [21, 13]]} />
    </g>
  ),
  line: (
    <g>
      <path d="M3 21 20 4" stroke="#222" strokeWidth="1.200" />
      <Dots p={[[3, 21], [20, 4]]} r={2} />
    </g>
  ),
  arc: (
    <g>
      <path d="M3 4c9-1 17 5 18 17" fill="none" stroke="#222" strokeWidth="1.200" />
      <Dots p={[[3, 4], [16, 8], [21, 20]]} r={2} />
    </g>
  ),
  circle: <circle cx="12" cy="12" r="10" fill="none" stroke="#222" strokeWidth="1.300" />,
  fillet: <path d="M1 3.500h10c7 0 9 4 9 9v10M11 3.500h9.500v9" fill="none" stroke="#aaa" />,
  chamfer: <path d="M1 3.500h20.500v19M11 3.500l10 9" fill="none" stroke="#aaa" />,
  rect: (
    <g>
      <rect x="2" y="5" width="20" height="14" fill="none" stroke="#222" strokeWidth="1.500" />
      <Dots p={[[2, 5], [22, 19]]} r={2} />
    </g>
  ),
  spline: (
    <g>
      <path d="M2 12 7 3l4 10 9-4-5 12" fill="none" stroke="#555" strokeWidth="1.300" />
      <Dots p={[[2, 12], [7, 3], [21, 9], [15, 22]]} fill="#777" />
      <Dots p={[[7, 9], [15, 13]]} r={2.2} />
    </g>
  ),
  point: <path d="M12 3v18M3 12h18" stroke="#222" strokeWidth="1.500" />,
  offsetCurve: <path d="M2 20V10C2 2 12 2 14 6c8 0 10 8 6 14ZM6 19v-8c0-4 6-4 6-1 5-1 7 5 4 9Z" fill="none" stroke="#aaa" />,
  trim: (
    <g fill="none" stroke="#a5a5a5" strokeWidth="1.200">
      <path d="M3 1l13 20M1 16h13" />
      <path d="M14 16h9" strokeDasharray="2 1" />
      <path d="M13 14l8-9v5l-5 5Z" fill="#ddd" />
    </g>
  ),
  extend: (
    <g fill="none" stroke="#a5a5a5" strokeWidth="1.200">
      <path d="M3 1l13 20M1 16h12" />
      <path d="M13 15l7-11 2 2-6 10Z" fill="#ddd" />
    </g>
  ),
  corner: (
    <g fill="none" stroke="#a5a5a5" strokeWidth="1.200">
      <path d="M2 12h12M14 12V22" />
      <path d="M14 12h9M14 12V1" strokeDasharray="2 1" />
      <path d="M9 6l10 10" stroke="#888" />
    </g>
  ),
  rapidDim: (
    <g fill="none" stroke="#a5a5a5" strokeWidth="1.200">
      <path d="M1.500 9v12M22.500 9v12M2 15h20M2 15l4-2v4ZM22 15l-4-2v4Z" />
      <path d="M9 20 19 3M11 8c4-6 9-4 6 1s-7 4-6-1Z" fill="#ddd" />
    </g>
  ),
  geomConstraint: <path d="M3 18l8-10M7 18l8-10M18.500 13v11" stroke="#a5a5a5" strokeWidth="1.200" />,
  symmetric: <path d="M3.500 4v18h18V4M6.500 4v15h12V4M12.500 1v22M5 5h5M8 2.500 10.500 5 8 7.500M20 5h-5M17 2.500 14.500 5 17 7.500" fill="none" stroke="#a0a0a0" strokeWidth="1.200" />,
  autoConstraint: (
    <g>
      <path d="M1 9l6 5-6 5Z" fill="#b5b5b5" />
      <path d="M11 12l8-10M15 12 23 2M17.500 15v9" stroke="#a5a5a5" strokeWidth="1.200" />
    </g>
  ),
  relations: (
    <g fill="none" stroke="#999" strokeWidth="1.200">
      <path d="M1.500 1.500h10v9h-10ZM11 14h12v9H11Z" />
      <path d="M11 14 20 5l2 2-8 8Z" fill="#ccc" />
      <rect x="1" y="17" width="6" height="6" strokeWidth="1" />
    </g>
  ),
  circlesOff: (
    <g fill="none" stroke="#999" strokeWidth="1.200">
      <circle cx="8" cy="6" r="5" />
      <circle cx="9" cy="18" r="5" />
    </g>
  ),
  // tree only
  clock: (
    <g>
      <circle cx="12" cy="12" r="10.500" fill="#dfe3ea" stroke="#555c68" strokeWidth="2.500" />
      <circle cx="12" cy="12" r="7.500" fill="#f8f8f8" stroke="#9aa" />
      <path d="M12 5v8h6" fill="none" stroke="#333" strokeWidth="2" />
    </g>
  ),
  modelView: (
    <g fill="none" stroke="#18a058" strokeWidth="2">
      <path d="M2 6 11 2l9 4v11l-9 5-9-5ZM2 6l9 5 9-5M11 2v20M3 16l8-4 8 4" />
      <path d="M11 22l12-3M19 17l4 2-3 3" stroke="#e0502a" />
    </g>
  ),
  camera: (
    <g strokeWidth="2">
      <path d="M1 8 13 2l9 3v14l-13 3-8-2Z" fill="#fff" stroke="#c82a2a" />
      <path d="M1 8l8 1v13M9 9l13-4" fill="none" stroke="#c82a2a" />
      <circle cx="15" cy="12" r="4" fill="#8db2e8" stroke="#26306c" />
      <path d="M17 15h6v7h-6Z" fill="#333c80" />
    </g>
  ),
  analysis: (
    <g strokeWidth="1.200">
      <Folder />
      <path d="M1 15h10v8H1Z" fill="#fff" stroke="#d03a3a" />
      <path d="M4 15v8M7 15v8M15 22V8M21 16V3" stroke="#d03a3a" strokeWidth="2" />
      <path d="M18 10c0-6 3-8 6-8" fill="none" stroke="#2a44b8" strokeWidth="2" />
    </g>
  ),
  folder: (
    <g stroke="#8e6a10" strokeWidth="1.200" strokeLinejoin="round">
      <path d="M1 21V5h8l2 3h9v4" fill="#f6d66c" />
      <path d="M1 21 6 11h18l-5 10Z" fill="#f9c93a" />
    </g>
  ),
  tick: <path d="M2 14l4-2 4 4 9-13 3 1L11 22H9Z" fill="#25b43c" stroke="#128a28" />,
  datum: (
    <g fill="none" stroke="#222" strokeWidth="1.800">
      <path d="M6 2v18M6 12l13 8M6 12l14-7M6 5l10 5v9M6 17l10-7" />
      <path d="M17 20l5 2M18 4l4-1" stroke="#2a9d45" />
      <path d="M4 4l2-4 2 4" stroke="#2a44c8" />
    </g>
  ),
  raster: (
    <g>
      <path d="M2 2h14l6 6v14H2Z" fill="#d9e2f8" stroke="#8492cc" strokeWidth="1.500" />
      <path d="M5 9c6-6 14 2 15 10-8 0-14-3-15-10Z" fill="#777" stroke="#222" strokeWidth="1.500" />
      <path d="M8 10l8 7M8 13l5 4" stroke="#eee" strokeWidth="1.500" />
    </g>
  ),
  sketch: (
    <g fill="none" stroke="#111" strokeWidth="2">
      <path d="M2 2h7v7H2ZM2 14h7v8H2ZM15 13h-2v9h10v-8h-3" />
      <path d="M13 13 21 2l3 2-8 10-4 2Z" fill="#f5c04a" stroke="#8a5a10" strokeWidth="1" />
    </g>
  ),
  composite: (
    <g fill="none" strokeWidth="2.400">
      <path d="M22 3c-9-1-5 18-13 20" stroke="#111" />
      <path d="M4 1v8l2 1M1 4h6" stroke="#e0502a" strokeWidth="1.800" />
    </g>
  ),
  pointSet: <path d="M5 1v8M1 5h8M12 8v8M8 12h8M19 15v8M15 19h8" stroke="#111" strokeWidth="1.800" />,
  extrudeSmall: (
    <g stroke="#b2561a" strokeWidth="1.500" strokeLinejoin="round">
      <path d="M2 5c3-3 6-3 10-2 3 1 5-1 10-1v17c-4 0-7 3-10 2-3 0-6 0-10 1Z" fill="#fbb04a" />
      <path d="M8 7v14M12 5v16M16 5v15" fill="none" stroke="#c8601c" />
      <path d="M2 5c5 3 11 2 13 0s4-2 7-3" fill="#fde0ab" />
    </g>
  ),
  intersect: (
    <g strokeWidth="1.400">
      <path d="M2 13 12 4l10 7-9 9Z" fill="#a9b9e6" stroke="#46589c" />
      <path d="M8 2l7 4v16l-7-5Z" fill="#e6b8b8" stroke="#8a3a4a" />
      <path d="M6 11l12 6" stroke="#cf2a2a" strokeWidth="2" />
    </g>
  ),
  curve: (
    <g>
      <path d="M2 18C5 8 9 6 12 12s6 6 10-6" fill="none" stroke="#6b1010" strokeWidth="2.200" />
      <Dots p={[[2, 18], [22, 5], [12, 13]]} r={2.2} fill="#b01818" />
    </g>
  ),
  bounded: (
    <g fill="none" stroke="#222" strokeWidth="1.800">
      <path d="M5 4h14l4 16H1Z" />
      <path d="M7 15V9c4-3 9-1 10 3l-2 3Z" stroke="#2a3ca8" />
    </g>
  ),
  sew: (
    <g fill="none" stroke="#35589a" strokeWidth="2.500">
      <circle cx="6" cy="6" r="4.500" />
      <circle cx="18" cy="6" r="4.500" />
      <path d="M8 10l8 12M16 10 8 22" />
    </g>
  ),
}

const Icon = ({ name, className = 'size-6' }: { name: string; className?: string }) => (
  <svg viewBox="0 0 24 24" className={`${className} shrink-0`} aria-hidden="true">
    {icons[name]}
  </svg>
)

const Caret = () => (
  <svg viewBox="0 0 5 3" className="h-[3px] w-[5px]" aria-hidden="true">
    <path d="M0 0h5L2.500 3Z" fill="#111" />
  </svg>
)

/* Items are separated by blanks: an icon name, "|" for a rule, "v" for a menu arrow */
const Tools = ({ items }: { items: string }) => (
  <>
    {items.split(' ').map((item, i) => {
      if (item === '|') return <span key={i} className="mx-[2px] h-7 w-[2px] shrink-0 border-l border-[#d4d8d8]" />
      if (item === 'v')
        return (
          <button key={i} type="button" aria-label="more options" className="flex h-8 w-3 shrink-0 items-center justify-center">
            <Caret />
          </button>
        )
      return (
        <button key={i} type="button" aria-label={item} className="flex h-8 w-[31px] shrink-0 items-center justify-center hover:bg-[#e5f1fb]">
          <Icon name={item} />
        </button>
      )
    })}
  </>
)

const Grip = () => <span className="mx-[3px] h-7 w-[3px] shrink-0 border-l-3 border-dotted border-[#b0b4b4]" />

const Overflow = ({ more = false }) => (
  <button type="button" aria-label="toolbar options" className="flex h-8 w-3 shrink-0 flex-col items-center justify-end gap-2 pb-2">
    {more && (
      <svg viewBox="0 0 8 6" className="h-[6px] w-2" aria-hidden="true">
        <path d="M1 0l2.500 3L1 6M4.500 0 7 3 4.500 6" fill="none" stroke="#111" strokeWidth="1.300" />
      </svg>
    )}
    <Caret />
  </button>
)

const Bar = ({ className = '', children }: { className?: string; children: ReactNode }) => (
  <div role="toolbar" className={`flex h-full shrink-0 items-center border-r border-b border-[#d9dddd] ${className}`}>
    {children}
  </div>
)

const snaps: [string, boolean][] = [
  ['snapAll', true],
  ['snapEnd', true],
  ['snapMid', true],
  ['snapPole', false],
  ['snapCurve', true],
  ['snapCross', false],
  ['snapCenter', true],
  ['snapQuad', false],
  ['snapPoint', true],
  ['snapOn', true],
  ['snapFace', false],
]

const SmallTool = ({ name, on = false, onClick }: { name: string; on?: boolean; onClick?: () => void }) => (
  <button
    type="button"
    aria-label={name}
    aria-pressed={on}
    onClick={onClick}
    className={`flex h-[22px] w-[23px] shrink-0 items-center justify-center ${on ? 'border border-[#a9c2bf] bg-[#c5d8d5]' : ''}`}
  >
    <Icon name={name} className="size-[18px]" />
  </button>
)

const Rule = () => <span className="mx-px h-6 w-[2px] shrink-0 border-l border-[#d4d8d8]" />

const SelectArrow = () => (
  <svg viewBox="0 0 8 4" className="pointer-events-none absolute top-2 right-[5px] h-1 w-2" aria-hidden="true">
    <path d="M0 0h8L4 4Z" fill="#111" />
  </svg>
)

const SelectionBar = () => {
  const [active, setActive] = useState(snaps)
  const toggle = (index: number) => setActive(active.map(([name, on], i) => [name, i === index ? !on : on]))

  return (
    <div role="toolbar" className="flex h-8 shrink-0 items-center border-b-2 border-[#8c8f90]">
      <div className="relative h-5 w-[99px] shrink-0 overflow-hidden border border-l-0 border-[#7d7d7d]">
        <select aria-label="选择过滤器" className="-ml-2 block h-[18px] w-[107px] appearance-none bg-white text-xs leading-[18px] text-[#1c1c1c] outline-none">
          <option>选择过滤器</option>
        </select>
        <SelectArrow />
      </div>
      <div className="relative mr-1 ml-2 h-5 w-[139px] shrink-0 border border-[#7d7d7d]">
        <select aria-label="选择范围" className="block h-[18px] w-full appearance-none bg-white pl-[2px] text-xs leading-[18px] text-[#1c1c1c] outline-none">
          <option>仅在工作部件内</option>
        </select>
        <SelectArrow />
      </div>
      <SmallTool name="filterAxes" />
      <Rule />
      <SmallTool name="filterGray" />
      <SmallTool name="filterBox" />
      <span className="flex w-3 justify-center"><Caret /></span>
      <SmallTool name="rotateOff" />
      <SmallTool name="handOff" />
      <Rule />
      <SmallTool name="marquee" />
      <span className="flex w-3 justify-center"><Caret /></span>
      <Rule />
      <SmallTool name="loaf" />
      <SmallTool name="boxUp" />
      <Rule />
      <div className="mr-px ml-[6px] flex">
        {active.map(([name, on], i) => (
          <SmallTool key={name} name={name} on={on} onClick={() => toggle(i)} />
        ))}
      </div>
      <Rule />
      <SmallTool name="snapGrid" />
    </div>
  )
}

interface Branch {
  icon: string
  label: string
  open?: boolean
  leaf?: boolean
  ticked?: boolean
}

const branches: Branch[] = [
  { icon: 'clock', label: '历史记录模式', leaf: true },
  { icon: 'modelView', label: '模型视图' },
  { icon: 'camera', label: '摄像机', ticked: true },
  { icon: 'analysis', label: '分析' },
  { icon: 'folder', label: '模型历史记录', open: true },
]

const features: [string, string][] = [
  ['datum', '基准坐标系 (0)'],
  ['raster', '光栅图像 (1)'],
  ['raster', '光栅图像 (2)'],
  ['sketch', '草图 (3) "SKETC'],
  ['sketch', '草图 (4) "SKETC'],
  ['revolve', '旋转 (5)'],
  ['composite', '复合曲线 (6)'],
  ['sketch', '草图 (7) "SKETC'],
  ['extrudeSmall', '拉伸 (8)'],
  ['extrudeSmall', '拉伸 (9)'],
  ['pointSet', '点集 (10)'],
  ['intersect', '相交曲线 (11)'],
  ['curve', '样条 (12)'],
  ['curve', '样条 (13)'],
  ['surfMesh', '通过曲线网格 (14)'],
  ['sketch', '草图 (15) "SKET'],
  ['trimSheet', '修剪片体 (16)'],
  ['surfMesh', '通过曲线网格 (17)'],
  ['mirror', '镜像几何体 (18)'],
  ['bounded', '有界平面 (19)'],
  ['sew', '缝合 (20)'],
]

const BranchRow = ({ item, first, last }: { item: Branch; first: boolean; last: boolean }) => (
  <li className="flex h-5 items-center border-b border-[#ececec] text-xs whitespace-nowrap text-[#1c1c1c] even:bg-[#f8f8f8]">
    <span className="relative mr-px ml-[10px] flex h-full w-[9px] shrink-0 flex-col">
      <span className={`h-1/2 border-b border-dotted border-[#999] ${first ? '' : 'border-l'}`} />
      <span className={`h-1/2 border-dotted border-[#999] ${last ? '' : 'border-l'}`} />
      {!item.leaf && (
        <button
          type="button"
          aria-label={item.open ? 'collapse' : 'expand'}
          className="absolute top-[5px] -left-1 flex size-[9px] items-center justify-center border border-[#ccc] bg-white"
        >
          <svg viewBox="0 0 5 5" className="size-[5px]" aria-hidden="true">
            <path d={item.open ? 'M0 2.500h5' : 'M0 2.500h5M2.500 0v5'} stroke="#111" />
          </svg>
        </button>
      )}
    </span>
    {item.ticked && <Icon name="tick" className="size-4" />}
    <Icon name={item.icon} className="mr-[3px] size-4" />
    {item.label}
  </li>
)

const FeatureRow = ({ icon, label }: { icon: string; label: string }) => (
  <li className="flex h-5 items-center border-b border-[#ececec] text-xs whitespace-nowrap text-[#9a9a9a] odd:bg-[#f8f8f8]">
    <span className="mr-px ml-[29px] flex h-full w-[10px] shrink-0 flex-col border-l border-dotted border-[#999]">
      <span className="h-1/2 border-b border-dotted border-[#999]" />
    </span>
    <label className="flex items-center">
      <span className="relative mr-[3px] flex size-3 shrink-0">
        <input type="checkbox" defaultChecked className="peer size-3 appearance-none border border-black bg-white" />
        <svg viewBox="0 0 12 12" className="pointer-events-none absolute inset-0 hidden size-3 peer-checked:block" aria-hidden="true">
          <path d="M2 5.500 5 9 10 2.500" fill="none" stroke="#1cb832" strokeWidth="2.400" />
        </svg>
      </span>
      <Icon name={icon} className="mr-[3px] size-4" />
      {label}
    </label>
  </li>
)

const Chevron = ({ d, className = 'h-2 w-2' }: { d: string; className?: string }) => (
  <svg viewBox="0 0 8 8" className={className} aria-hidden="true">
    <path d={d} fill="none" stroke="#444" strokeWidth="1.600" />
  </svg>
)

const Navigator = () => (
  <aside className="flex w-48 shrink-0 flex-col border-r-2 border-[#8c8f90] bg-white pr-[9px]">
    <div className="flex h-[29px] shrink-0 items-center justify-between pr-[6px] pl-1">
      <h2 className="text-xs text-[#1c1c1c]">部件导航器</h2>
      <button type="button" aria-label="undock" className="mt-px h-[11px] w-3 border border-t-2 border-[#111]" />
    </div>

    <div className="flex h-[22px] shrink-0 items-center gap-[18px] border border-[#d5d5d5] bg-[#efefef] pl-[7px] text-xs text-[#1c1c1c]">
      名称
      <svg viewBox="0 0 9 5" className="h-[5px] w-[9px]" aria-hidden="true">
        <path d="M0 5h9L4.500 0Z" fill="#222" />
      </svg>
    </div>

    <div className="flex min-h-0 flex-1 border-l border-[#d5d5d5]">
      <div className="mr-px min-w-0 flex-1 overflow-hidden">
        <ul>
          {branches.map((item, i) => (
            <BranchRow key={item.label} item={item} first={i === 0} last={i === branches.length - 1} />
          ))}
        </ul>
        <ul>
          {features.map(([icon, label]) => (
            <FeatureRow key={label} icon={icon} label={label} />
          ))}
        </ul>
      </div>
      <div className="flex w-[17px] shrink-0 flex-col items-center bg-[#f0f0f0] pr-px pb-1">
        <span className="flex h-[18px] items-center"><Chevron d="M0 6l4-4 4 4" /></span>
        <span className="h-[94px] w-full bg-[#cdcdcd]" />
        <span className="mt-auto"><Chevron d="M0 2l4 4 4-4" /></span>
      </div>
    </div>

    <div className="flex h-[18px] shrink-0 items-center border-l border-[#d5d5d5] bg-[#f0f0f0] pr-[22px] pl-[5px]">
      <Chevron d="M6 0 2 4l4 4" />
      <span className="mr-auto ml-[5px] h-4 w-[41px] bg-[#cdcdcd]" />
      <Chevron d="M2 0l4 4-4 4" />
    </div>
    <div className="mb-[2px] h-[5px] shrink-0 border border-[#a8a8a8] bg-[#dcdcdc]" />

    {['相依性', '细节', '预览'].map((title) => (
      <button
        key={title}
        type="button"
        className="flex h-6 shrink-0 items-center justify-between border-b-2 border-[#cfd2d3] pr-[5px] pl-[7px] text-sm text-[#2b7ea6]"
      >
        {title}
        <svg viewBox="0 0 11 8" className="h-2 w-[11px]" aria-hidden="true">
          <path d="M1 0l4.500 6.500L10 0" fill="none" stroke="#2b7ea6" strokeWidth="2" />
        </svg>
      </button>
    ))}
    <div className="h-[5px] shrink-0" />
  </aside>
)

const SHELL =
  'M600 340L593 353C585 361 560 378 553 393C552 398 560 402 565 412C552 448 542 500 539 537C541 556 575 581 618 582C665 582 697 545 708 503C718 465 722 430 729 396C736 366 752 337 777 331L793 331L760 322Z'

const Kettle = () => (
  <svg viewBox="192 135 1032 658" className="h-full w-full" role="img" aria-label="kettle model">
    <defs>
      <linearGradient id="body" x1="0" y1=".4" x2="1" y2="0">
        <stop offset="0" stopColor="#700000" />
        <stop offset=".4" stopColor="#620000" />
        <stop offset=".75" stopColor="#800000" />
        <stop offset="1" stopColor="#860000" />
      </linearGradient>
      <linearGradient id="teal" x1=".7" y1="0" x2=".4" y2="1">
        <stop offset="0" stopColor="#00564c" />
        <stop offset=".45" stopColor="#00453f" />
        <stop offset="1" stopColor="#003430" />
      </linearGradient>
      <radialGradient id="sheen" cx="685" cy="400" r="75" gradientUnits="userSpaceOnUse">
        <stop offset="0" stopColor="#0b6a5e" stopOpacity=".65" />
        <stop offset="1" stopColor="#0b6a5e" stopOpacity="0" />
      </radialGradient>
      <linearGradient id="lid" x1="597" y1="330" x2="760" y2="345" gradientUnits="userSpaceOnUse">
        <stop offset="0" stopColor="#56a6fb" />
        <stop offset=".4" stopColor="#72d2ff" />
        <stop offset=".65" stopColor="#82eeff" />
        <stop offset="1" stopColor="#66d4fb" />
      </linearGradient>
      <linearGradient id="violet" x1="740" y1="285" x2="840" y2="400" gradientUnits="userSpaceOnUse">
        <stop offset="0" stopColor="#7a34e4" />
        <stop offset=".25" stopColor="#8648f8" />
        <stop offset=".5" stopColor="#6a30cc" />
        <stop offset="1" stopColor="#7448d8" />
      </linearGradient>
      <linearGradient id="grip" x1="800" y1="400" x2="850" y2="375" gradientUnits="userSpaceOnUse">
        <stop offset="0" stopColor="#6c0000" />
        <stop offset=".45" stopColor="#4e0000" />
        <stop offset="1" stopColor="#7e0202" />
      </linearGradient>
      <linearGradient id="level" x1="0" y1="0" x2="0" y2="1">
        <stop offset="0" stopColor="#007c00" />
        <stop offset=".5" stopColor="#006200" />
        <stop offset="1" stopColor="#005600" />
      </linearGradient>
    </defs>

    {/* power switch */}
    <path d="M811 520c5-3 12 0 13 6 0 6-6 8-12 7Z" fill="#0b0b0b" />
    <path d="M814 524l7 1M816 529l6-2" stroke="#777" strokeWidth=".6" />

    {/* body */}
    <path
      d="M777 330C760 334 748 350 740 367C700 420 560 430 549 470C541 505 535 560 535 612C540 650 600 672 667 672C740 672 808 645 817 607C819 570 813 515 800 465C790 430 775 405 763 387C757 380 755 372 757 363C760 352 771 346 782 346L790 335Z"
      fill="url(#body)"
    />
    <path d="M535 604C540 640 600 669 667 669C740 669 808 640 817 600" fill="none" stroke="#3a0808" strokeWidth="1" />

    {/* shell and spout */}
    <path d={SHELL} fill="url(#teal)" />
    <path d={SHELL} fill="url(#sheen)" />
    <path d="M539 537C541 556 575 581 618 582C665 582 697 545 708 503C718 465 722 430 729 396C736 366 752 337 777 331" fill="none" stroke="#4a4f52" strokeWidth="1" />
    <path d="M553 397C565 404 590 397 632 382C600 384 580 360 596 352C580 364 556 380 553 397Z" fill="#064a40" />
    <path d="M553 395C560 404 590 397 632 382" fill="none" stroke="#3c4a46" strokeWidth="1" />
    <path d="M563 405C580 410 592 402 598 394M568 410C566 430 570 446 575 446C586 446 610 410 628 384M572 446C556 490 550 560 549 636" fill="none" stroke="#454b4a" strokeWidth=".9" />
    <path d="M620 400C640 415 660 430 669 442C678 420 690 392 722 394" fill="none" stroke="#2c4a45" strokeWidth=".8" />
    <path d="M589 368l-12 28 28-6Z" fill="#0a3a34" />
    <g fill="#2f7a6c" stroke="#1a3e38" strokeWidth=".5">
      {[[590, 370], [589, 377], [596, 378], [583, 384], [593, 385], [600, 386], [586, 390], [579, 396], [605, 387]].map(([x, y]) => (
        <circle key={`${x}-${y}`} cx={x} cy={y} r="1.800" />
      ))}
    </g>

    {/* handle */}
    <path
      d="M777 330C800 328 822 340 834 356C848 378 855 410 854 445C850 451 842 449 836 443C826 430 820 417 806 395C797 378 797 364 790 352C786 345 775 344 767 350C760 355 756 363 756 372L748 362C755 342 764 333 777 330Z"
      fill="url(#grip)"
    />
    <path d="M779 332C800 331 822 340 834 360C845 380 850 405 851 430" fill="none" stroke="#8a0c0c" strokeWidth="3" opacity=".5" />
    <path
      d="M717 281C730 279 745 279 757 281C775 286 797 294 812 311C830 331 843 356 850 380C855 405 856 430 853 446L853 415C849 385 840 363 827 347C814 335 795 331 777 330C768 330 763 328 759 325C740 316 732 298 717 281Z"
      fill="url(#violet)"
      stroke="#33215c"
      strokeWidth=".8"
    />

    {/* lid */}
    <path
      d="M600 340C630 305 675 284 717 281C731 298 738 315 759 325C738 343 722 357 704 365C680 378 655 383 630 382C612 380 604 374 600 366C596 356 596 349 600 340Z"
      fill="url(#lid)"
      stroke="#1c3c50"
      strokeWidth="1"
    />

    {/* seams */}
    <g fill="none" stroke="#26333a" strokeWidth="1">
      <path d="M602 372C620 350 650 310 684 296C710 284 735 284 757 286" />
      <path d="M651 300C664 297 670 309 678 321C690 340 700 356 706 364C714 376 722 384 728 392" />
      <path d="M765 288C775 300 780 320 776 345" />
      <path d="M830 334C832 345 826 353 812 358C804 359 798 358 793 356" stroke="#5a4050" />
      <path d="M732 393C737 400 746 402 755 401V419C748 410 740 406 733 406M755 401C758 396 762 392 761 387" stroke="#5a2a2a" />
    </g>

    {/* level window */}
    <path
      d="M746 439C737 439 731 449 732 460C733 475 742 483 743 498C744 515 738 526 732 537C727 547 726 566 733 577C741 587 760 589 770 578C782 566 783 545 779 531C773 518 764 513 760 496C756 482 759 468 758 456C758 445 753 439 746 439Z"
      fill="url(#level)"
      stroke="#5c4a3a"
      strokeWidth="1"
    />

    {/* base ring */}
    <path d="M536 597C542 628 600 650 667 650C740 650 808 625 817 592" fill="none" stroke="#2a1414" strokeWidth="3" />
    <path d="M536 597C542 628 600 650 667 650C740 650 808 625 817 592" fill="none" stroke="#f4f0ea" strokeWidth="1.500" />

    {/* lid button */}
    <path d="M753 284C753 280 757 278 760 278C774 278 787 284 797 290C799 294 798 298 796 299C784 297 772 290 758 289Z" fill="#0c0c0c" />
    <path d="M758 283C772 284 784 290 796 294" stroke="#3a3a3a" strokeWidth=".8" fill="none" />
  </svg>
)

const Triad = () => (
  <svg viewBox="232 688 60 72" className="absolute bottom-8 left-10 h-[72px] w-[60px]" role="img" aria-label="axes">
    <g fill="#cfcfcf" fillOpacity=".7" stroke="#9a9a9a">
      <path d="M247 716 265 711 276 720V739L256 744 247 737Z" />
      <path d="M247 716 256 723 276 720M256 723V744M265 711V733L276 739M265 733L247 737" fill="none" />
    </g>
    <path d="M246 736 274 730" stroke="#d98a8e" strokeWidth="2" />
    <path d="M273 727l8 2-7 4Z" fill="#d0303a" />
    <path d="M246 735V710" stroke="#167a1e" strokeWidth="3" />
    <path d="M242.500 712 246 702l3.500 10Z" fill="#0f5a16" />
    <path d="M247 738l9 8" stroke="#1238d8" strokeWidth="3" />
    <path d="M253 747l5-5 4 9Z" fill="#1238d8" />
    <circle cx="245.500" cy="736.500" r="3.500" fill="#aaa" stroke="#777" strokeWidth=".6" />
    <g fontFamily="Liberation Sans" fontSize="11">
      <text x="241.500" y="701" fill="#2a8a30">Y</text>
      <text x="281" y="730" fill="#d0303a">X</text>
      <text x="260" y="756" fill="#1a40e0">Z</text>
    </g>
  </svg>
)

const App = () => {
  return (
    <div className="flex h-screen flex-col overflow-hidden border-t border-[#c3cdce] bg-white font-['Open_Sans','Noto_Sans_CJK_SC',sans-serif]">
      <header className="shrink-0 overflow-hidden">
        <div className="flex h-[34px] items-center">
          <Bar>
            <button type="button" className="flex h-8 w-9 items-center justify-between pr-[3px] pl-[2px] text-xs whitespace-nowrap text-[#1c1c1c]">
              启动
              <Caret />
            </button>
            <Tools items="new open save | cut copy paste | undo v redo | cube v | info" />
            <div className="relative mr-1 ml-[10px]">
              <input
                type="text"
                aria-label="查找命令"
                defaultValue="查找命令"
                className="block h-5 w-[125px] border border-[#8a8f90] pl-px text-xs text-[#1c1c1c] outline-none"
              />
              <svg viewBox="0 0 14 14" className="absolute top-[3px] right-[2px] size-[14px]" aria-hidden="true">
                <circle cx="9" cy="5" r="4" fill="#fff" stroke="#333" strokeWidth="1.200" />
                <path d="M6 8 1.500 13" stroke="#333" strokeWidth="2.600" />
                <path d="M6 8 1.500 13" stroke="#eee" strokeWidth="1" />
              </svg>
            </div>
            <Overflow />
          </Bar>
          <Bar>
            <Grip />
            <Tools items="fit v bracket v cube v clipOff clip v background v | viewOut viewReplace" />
            <Overflow />
          </Bar>
          <Bar className="ml-2">
            <Grip />
            <Tools items="layerList wcs v | handDiamond palette | playDiamond v | measurePath v measure" />
            <Overflow />
          </Bar>
        </div>

        <div className="flex h-[34px] items-center">
          <Bar>
            <Tools items="v extrude revolve hole boss rib pocket | offsetRegion pattern patternBoxes mirror unite v trimBody trimSheet blade shell thicken | edgeBlend faceBlend draft" />
            <span className="w-7" />
            <Overflow more />
          </Bar>
          <Bar>
            <Grip />
            <Tools items="moveFace v pullFace v deleteFace copyFace v patternFace v dimFace v groupFace shapeFace moveEdge v" />
            <Overflow />
          </Bar>
          <Bar>
            <Grip />
            <Tools items="surfRuled surfMesh surfFill surfSweep curveTools surfSwoop" />
          </Bar>
        </div>

        <div className="flex h-[34px] items-center">
          <Bar>
            <Tools items="layers layerList | tag | checkBlock checkSketch checkPart | abc" />
            <Overflow />
          </Bar>
          <Bar>
            <Grip />
            <Tools items="gearFlat gearCurve listHand" />
            <Overflow />
          </Bar>
          <Bar>
            <Grip />
            <Tools items="coil spring ring | springCut" />
            <Overflow />
          </Bar>
          <Bar className="ml-24">
            <Grip />
            <Tools items="triangle table folderPoints folderCircles note brushDim | tolerance" />
            <Overflow />
          </Bar>
          <Bar>
            <Grip />
            <Tools items="lock lock" />
            <Overflow />
          </Bar>
        </div>

        <SelectionBar />
      </header>

      <main className="flex min-h-0 flex-1">
        <Navigator />
        <section className="relative min-w-0 flex-1 bg-linear-to-b from-[#b0b1b3] via-[#d4d5d7] to-[#e8e9eb]">
          <Kettle />
          <Triad />
        </section>
      </main>

      <footer className="flex h-[26px] shrink-0 items-start overflow-hidden">
        <div className="flex items-center border-r border-[#d9dddd]">
          <Tools items="v assembly asmWindow addPart v movePart mirrorPart constrain | wrench parts sequence | crate | chain linkBox treeInfo" />
          <span className="w-5" />
          <Overflow more />
        </div>
        <div className="flex items-center">
          <Grip />
          <Tools items="sketchNew" />
          <button type="button" disabled className="flex h-8 shrink-0 items-center gap-1 pr-1 pl-1 text-[11px] whitespace-nowrap text-[#b4b4b4]">
            <Icon name="finish" />
            完成草图
          </button>
          <Tools items="profile line arc circle fillet chamfer rect spline point offsetCurve v | trim extend corner | rapidDim v | geomConstraint symmetric autoConstraint v | relations circlesOff" />
        </div>
      </footer>
    </div>
  )
}

export default App
